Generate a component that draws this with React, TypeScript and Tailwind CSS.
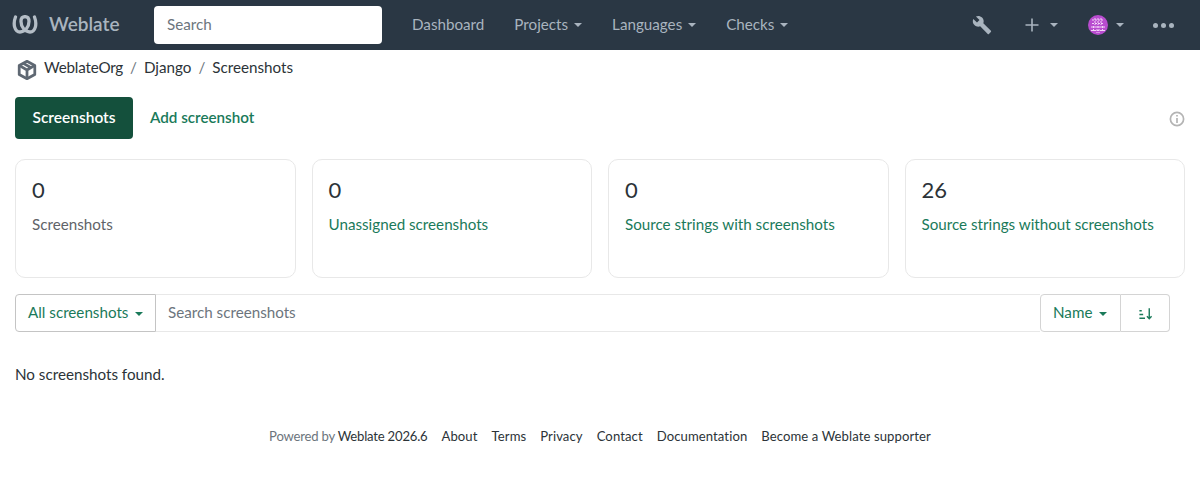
function Caret({ className }: { className: string }) {
  return <span className={`inline-block h-0 w-0 border-x-[4px] border-t-[4px] border-x-transparent ${className}`} />
}

function WeblateLogo() {
  return (
    <svg viewBox="0 0 26 19" className="h-[19px] w-[26px]" fill="none" stroke="#b4bdc6" strokeWidth="3.3" strokeLinecap="round">
      <path d="M3.5 2C0.8 9 2.5 17 8 17C13 17 17 12 17 6.5C17 3 15.5 1.7 13 1.7" />
      <path d="M22.5 2C25.2 9 23.5 17 18 17C13 17 9 12 9 6.5C9 3 10.5 1.7 13 1.7" />
    </svg>
  )
}

function NavItem({ label, caret }: { label: string; caret?: boolean }) {
  return (
    <a className="flex items-center pb-[2px] text-[#a9b4bf]">
      {label}
      {caret && <Caret className="ml-[6px] mt-[2px] border-t-[#a9b4bf]" />}
    </a>
  )
}

function StatCard({ count, label, link }: { count: string; label: string; link?: boolean }) {
  return (
    <div className="h-[119px] flex-1 rounded-[10px] border border-[#e8e8e8] px-4 pt-[14px]">
      <div className="text-[22px] leading-[31px] text-[#2c3338]">{count}</div>
      <div className={`mt-[8px] leading-[22px] ${link ? 'text-[#1a7a5a]' : 'text-[#5f6368]'}`}>{label}</div>
    </div>
  )
}

const footerLinks = ['About', 'Terms', 'Privacy', 'Contact', 'Documentation', 'Become a Weblate supporter']

export default function App() {
  return (
    <div className="min-h-[495px] bg-white font-['Lato','Noto_Sans',sans-serif] text-[15.2px] text-[#2c3338]">
      <nav className="flex h-[50px] items-center bg-[#2a3744] pl-3 pr-[26px]">
        <div className="flex w-[142px] items-center gap-[11px] pb-[1px] text-[19px] font-semibold text-[#a9b4bf]">
          <WeblateLogo />
          Weblate
        </div>
        <div className="flex h-[38px] w-[228px] items-center rounded-[4px] bg-white px-[13px] pb-[2px] text-[#6c757d]">Search</div>
        <div className="ml-[30px] flex gap-[30px]">
          <NavItem label="Dashboard" />
          <NavItem label="Projects" caret />
          <NavItem label="Languages" caret />
          <NavItem label="Checks" caret />
        </div>
        <div className="ml-auto flex items-center">
          <svg viewBox="0 0 24 24" className="h-[20px] w-[20px]" fill="#a9b4bf">
            <path d="M22.7 19l-9.1-9.1c.9-2.3.4-5-1.5-6.9-2-2-5-2.4-7.4-1.3L9 6 6 9 1.6 4.7C.4 7.1.9 10.1 2.9 12.1c1.9 1.9 4.6 2.4 6.9 1.5l9.1 9.1c.4.4 1 .4 1.4 0l2.3-2.3c.5-.4.5-1.1.1-1.4z" />
          </svg>
          <svg viewBox="0 0 16 16" className="ml-[32px] h-[16px] w-[16px]" stroke="#a9b4bf" strokeWidth="1.6">
            <path d="M8 1.5v13M1.5 8h13" />
          </svg>
          <Caret className="ml-[10px] border-t-[#a9b4bf]" />
          <svg viewBox="0 0 20 20" className="ml-[30px] h-[20px] w-[20px] rounded-full bg-[#b84ccf]">
            <path d="M4 5h12M4 8.5h12M7 3v7M10 3v7M13 3v7M3 12h14M3 15.5h14M5.5 11v6M9 11v7M11 11v7M14.5 11v6" stroke="#f3d4f8" strokeWidth="1" strokeDasharray="2 1" />
          </svg>
          <Caret className="ml-[8px] border-t-[#a9b4bf]" />
          <div className="ml-[29px] flex gap-[3px]">
            <span className="h-[5px] w-[5px] rounded-full bg-[#a9b4bf]" />
            <span className="h-[5px] w-[5px] rounded-full bg-[#a9b4bf]" />
            <span className="h-[5px] w-[5px] rounded-full bg-[#a9b4bf]" />
          </div>
        </div>
      </nav>

      <div className="flex h-[35px] items-center pl-4">
        <svg viewBox="0 0 24 24" className="mt-[5px] h-[22px] w-[22px]" fill="none" stroke="#5f6873" strokeWidth="3" strokeLinejoin="round">
          <path d="M12 2.5l8.5 4.5v10L12 21.5 3.5 17V7z" />
          <path d="M3.5 7l8.5 5 8.5-5M12 12v9.5M8 4.8l8.5 4.8" />
        </svg>
        <span className="ml-[6px] tracking-[-0.2px]">WeblateOrg</span>
        <span className="mx-[7px] text-[#6c757d]">/</span>
        <span>Django</span>
        <span className="mx-[7px] text-[#6c757d]">/</span>
        <span>Screenshots</span>
      </div>

      <div className="mt-[12px] flex items-center px-[15px]">
        <div className="flex h-[42px] w-[118px] items-center justify-center rounded-[4px] bg-[#14503c] pb-[1px] text-[15.5px] font-semibold text-white">Screenshots</div>
        <div className="ml-[17px] pb-[1px] font-semibold text-[#1a7a5a]">Add screenshot</div>
        <svg viewBox="0 0 16 16" className="ml-auto mt-[2px] h-[16px] w-[16px]" fill="none" stroke="#b4b4b4" strokeWidth="1.7">
          <circle cx="8" cy="8" r="6.6" />
          <path d="M8 7v5M8 4v1.6" />
        </svg>
      </div>

      <div className="mt-[20px] flex gap-4 px-[15px]">
        <StatCard count="0" label="Screenshots" />
        <StatCard count="0" label="Unassigned screenshots" link />
        <StatCard count="0" label="Source strings with screenshots" link />
        <StatCard count="26" label="Source strings without screenshots" link />
      </div>

      <div className="ml-[15px] mr-[30px] mt-4 flex h-[38px] text-[#1a7a5a]">
        <div className="flex w-[141px] items-center rounded-l-[4px] border border-[#c4c4c4] pb-[1px] pl-3">
          All screenshots
          <Caret className="ml-[7px] mt-[2px] border-t-[#1a7a5a]" />
        </div>
        <div className="flex flex-1 items-center border-y border-[#e8e8e8] pb-[1px] pl-3 text-[#6c757d]">Search screenshots</div>
        <div className="flex w-[81px] items-center rounded-l-[4px] border border-[#d4d4d4] pb-[1px] pl-3">
          Name
          <Caret className="ml-[7px] mt-[2px] border-t-[#1a7a5a]" />
        </div>
        <div className="flex w-[49px] items-center justify-center rounded-r-[4px] border-y border-r border-[#d4d4d4]">
          <svg viewBox="0 0 16 16" className="h-[15px] w-[15px]" fill="none" stroke="#1a7a5a" strokeWidth="1.5">
            <path d="M1.5 5h2.5M1.5 9h4M1.5 13h6M12 2.5v11M9.5 11l2.5 2.5 2.5-2.5" />
          </svg>
        </div>
      </div>

      <p className="mt-[31px] px-[15px] leading-[22px]">No screenshots found.</p>

      <div className="mt-[42px] flex justify-center gap-[14px] text-[13.1px] tracking-[0.09px] text-[#2c3338]">
        <span className="tracking-[-0.2px]">
          <span className="text-[#6c757d]">Powered by </span>Weblate 2026.6
        </span>
        {footerLinks.map((l) => (
          <span key={l}>{l}</span>
        ))}
      </div>
    </div>
  )
}
